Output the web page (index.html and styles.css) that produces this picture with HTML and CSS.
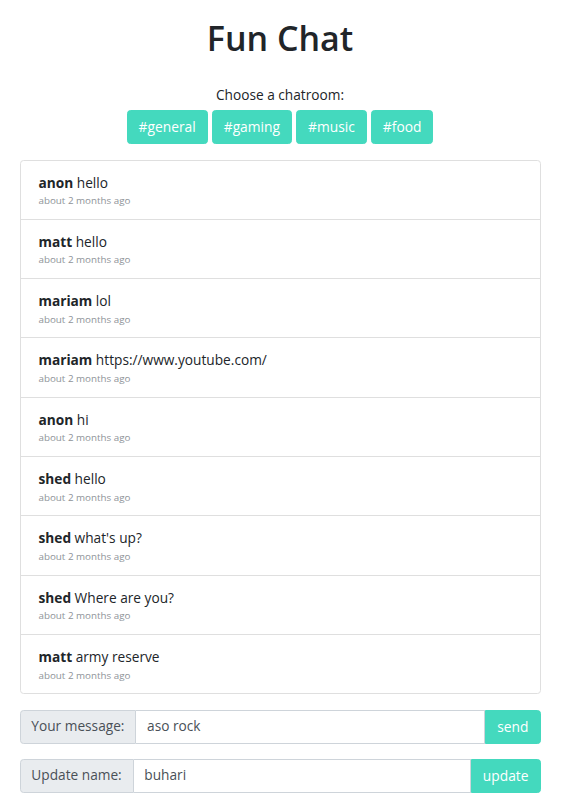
FILE: index.html
```html
<!DOCTYPE html>
<html lang="en">
<head>
<meta charset="utf-8">
<title>Fun Chat</title>
<link rel="stylesheet" href="styles.css">
</head>
<body>
<div class="container">
  <h1 class="title">Fun Chat</h1>
  <p class="choose">Choose a chatroom:</p>
  <div class="rooms">
    <button class="btn">#general</button>
    <button class="btn">#gaming</button>
    <button class="btn">#music</button>
    <button class="btn">#food</button>
  </div>
  <ul class="messages">
    <li class="msg"><div class="line"><b>anon</b> hello</div><div class="time">about 2 months ago</div></li>
    <li class="msg"><div class="line"><b>matt</b> hello</div><div class="time">about 2 months ago</div></li>
    <li class="msg"><div class="line"><b>mariam</b> lol</div><div class="time">about 2 months ago</div></li>
    <li class="msg"><div class="line"><b>mariam</b> https://www.youtube.com/</div><div class="time">about 2 months ago</div></li>
    <li class="msg"><div class="line"><b>anon</b> hi</div><div class="time">about 2 months ago</div></li>
    <li class="msg"><div class="line"><b>shed</b> hello</div><div class="time">about 2 months ago</div></li>
    <li class="msg"><div class="line"><b>shed</b> what's up?</div><div class="time">about 2 months ago</div></li>
    <li class="msg"><div class="line"><b>shed</b> Where are you?</div><div class="time">about 2 months ago</div></li>
    <li class="msg"><div class="line"><b>matt</b> army reserve</div><div class="time">about 2 months ago</div></li>
  </ul>
  <form class="group">
    <span class="label">Your message:</span>
    <input class="field" type="text" value="aso rock">
    <button class="btn addon" type="button">send</button>
  </form>
  <form class="group">
    <span class="label">Update name:</span>
    <input class="field" type="text" value="buhari">
    <button class="btn addon" type="button">update</button>
  </form>
</div>
</body>
</html>
```
FILE: styles.css
```css
* { box-sizing: border-box; }
html, body { margin: 0; padding: 0; background: #fff; }
body {
  font-family: "Open Sans", "Segoe UI", "Noto Sans", sans-serif;
  font-size: 13.7px;
  line-height: 1.5;
  color: #212529;
}
.container {
  width: 521px;
  margin-left: 19.5px;
  padding-top: 17px;
}
.title {
  margin: 0;
  text-align: center;
  font-size: 34px;
  font-weight: 600;
  line-height: 43px;
}
.choose {
  margin: 24px 0 4px;
  text-align: center;
  line-height: 21.6px;
}
.rooms {
  display: flex;
  justify-content: center;
  gap: 4px;
}
.btn {
  font: inherit;
  font-size: 13.8px;
  line-height: 21.6px;
  color: #fff;
  background: #44d9be;
  border: 1px solid #44d9be;
  border-radius: 3.6px;
  padding: 5.2px 11px;
  height: 34px;
  cursor: pointer;
}
.messages {
  list-style: none;
  margin: 16px 0 0;
  padding: 0;
  border: 1px solid #dfdfdf;
  border-radius: 3.6px;
}
.msg {
  height: 59.3px;
  padding: 11px 18px 0;
  border-top: 1px solid #dfdfdf;
}
.msg:first-child { border-top: 0; height: 58.3px; }
.line { line-height: 21.6px; }
.line b { font-weight: 700; }
.time {
  font-size: 9.8px;
  line-height: 16px;
  color: #8e9398;
}
.group {
  display: flex;
  height: 34px;
  margin: 15.5px 0 0;
}
.group + .group { margin-top: 15px; }
.label {
  display: flex;
  align-items: center;
  padding: 0 10.8px;
  background: #e9ecef;
  border: 1px solid #ced4da;
  border-radius: 3.6px 0 0 3.6px;
  color: #495057;
  white-space: nowrap;
}
.field {
  flex: 1;
  min-width: 0;
  font: inherit;
  color: #495057;
  border: 1px solid #ced4da;
  border-left: 0;
  padding: 0 10.8px;
  outline: none;
}
.addon {
  border-radius: 0 3.6px 3.6px 0;
  padding: 0 11px;
}
```
